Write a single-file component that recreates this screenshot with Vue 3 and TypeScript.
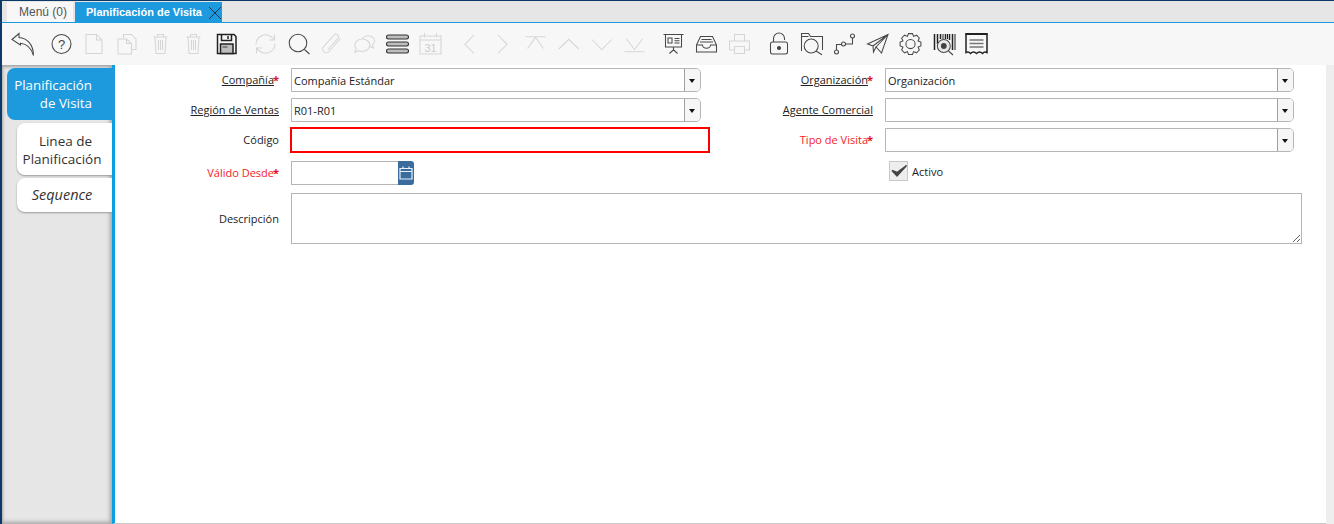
<script setup lang="ts">
interface Tool {
  name: string
  body: string
  off?: boolean
}

// gear outline, 8 teeth
const gearPath = (() => {
  const pts: string[] = []
  for (let i = 0; i < 8; i++) {
    const a = (i * Math.PI) / 4
    const step = Math.PI / 4
    const corners: [number, number][] = [
      [8.2, a - step * 0.5],
      [10.6, a - step * 0.24],
      [10.6, a + step * 0.24],
      [8.2, a + step * 0.5]
    ]
    for (const [r, t] of corners) {
      pts.push((14 + r * Math.cos(t)).toFixed(1) + ' ' + (14 + r * Math.sin(t)).toFixed(1))
    }
  }
  return 'M' + pts.join('L') + 'Z'
})()

const p = (d: string) => `<path d="${d}"/>`

const groups: Tool[][] = [
  [{ name: 'back', body: p('M3.5 9.5L10.5 3.5V7.5C18 8 25 14 25 25.5C23 18.5 18 13.8 12 13.2V15Z') }],
  [
    { name: 'help', body: '<circle cx="14" cy="14" r="9.5"/><text x="14" y="18.5" text-anchor="middle" font-size="13" font-family="Liberation Sans" fill="#444" stroke="none">?</text>' },
    { name: 'new', off: true, body: p('M5.5 4.5H16L21.5 10V23.5H5.5ZM16 4.5V10H21.5') },
    { name: 'copy', off: true, body: p('M10 8.5V4.5H18L22.5 9V19.5H18M4.5 9H13L18 13.5V24H4.5ZM13 9V13.5H18') },
    { name: 'delete', off: true, body: p('M7 7H21M11 7V4.5H17V7M8.5 7L9.5 23.5H18.5L19.5 7M12 10V20M14 10V20M16 10V20') },
    { name: 'deleteSel', off: true, body: p('M7 7H21M11 7V4.5H17V7M8.5 7L9.5 23.5H18.5L19.5 7M12 10V20M14 10V20M16 10V20') },
    { name: 'save', body: '<path class="dark" d="M5 4.5H21.5L23.5 6.5V23.5H5Z"/><path class="dark" d="M9 4.5V10.5H19V4.5M15.5 6V9"/><path class="dark shade" d="M8 14H20.5V23.5H8Z"/><path d="M10 17H15"/>' }
  ],
  [
    { name: 'refresh', off: true, body: p('M4.5 14.5A9.5 9.5 0 0 1 20.5 7.5L23 10M23.5 13.5A9.5 9.5 0 0 1 7.5 20.5L5 18M23 4.5V10H17.5M5 23.5V18H10.5') },
    { name: 'find', body: '<circle cx="13.5" cy="13" r="8.8"/><path d="M20 19.5L25 24"/>' },
    { name: 'attach', off: true, body: p('M23 8.5L11.5 21.5A3.6 3.6 0 0 1 6 16.8L16.5 5A2.6 2.6 0 0 1 20.5 8.3L10.5 19.5') },
    { name: 'chat', off: true, body: '<path d="M11 9A7.5 6.2 0 1 1 8 20.5L4.5 22.5L5.5 18.5A7.5 6.2 0 0 1 11 9Z"/><path d="M12 8.5A6.5 5.5 0 0 1 24 10.5C24 12.5 23.5 13.5 22 15L23 18L19.5 16.5"/>' },
    { name: 'grid', body: '<rect class="bar" x="3" y="5" width="22" height="4" rx="2"/><rect class="bar" x="3" y="12" width="22" height="4" rx="2"/><rect class="bar" x="3" y="19" width="22" height="4" rx="2"/>' },
    { name: 'calendar', off: true, body: '<path d="M3.5 6H24.5V24H3.5ZM3.5 10H24.5M8 3V7.5M20 3V7.5"/><text x="14" y="21.5" text-anchor="middle" font-size="11" font-family="Liberation Sans" fill="#ccc" stroke="none">31</text>' }
  ],
  [
    { name: 'prev', off: true, body: p('M18.5 5L9.5 14.3L18.5 23.5') },
    { name: 'next', off: true, body: p('M9.5 5L18.5 14.3L9.5 23.5') },
    { name: 'first', off: true, body: p('M4 6.7H24M6 18.5L14 7.5L22 18.5') },
    { name: 'up', off: true, body: p('M4.3 19L14.3 9.3L24.3 19') },
    { name: 'down', off: true, body: p('M4.3 9.5L14.3 19.5L24.3 9.5') },
    { name: 'last', off: true, body: p('M6 9L14 19.5L22 9M4 21.7H24') }
  ],
  [
    { name: 'report', body: p('M4 4.5H24M6 4.5V17H22V4.5M14 17V20M10 23.5L14 19.8L18 23.5M8.5 8H12.5V13H8.5ZM15 8.5H20M15 10.8H20M15 13H20') },
    { name: 'archive', body: p('M4 15L8 6.5H20L24 15V22H4ZM4 15H10A4 3.2 0 0 0 18 15H24M9 9.5H19M7.5 12H20.5') },
    { name: 'print', off: true, body: p('M9 11V4.5H19V11M9 20H4V11H24V20H19M9 16.5H19V23.5H9Z') }
  ],
  [
    { name: 'lock', body: '<rect x="6" y="12" width="17" height="12" rx="2"/><path d="M9 12V8.5A5.5 5.5 0 0 1 20 8.5V10"/><circle class="solid" cx="14.5" cy="18" r="1.5"/>' },
    { name: 'zoom', body: '<path d="M4 21V3.5H11L13 6.5H25V20"/><path d="M4 6.5H11"/><circle cx="13.7" cy="16" r="7"/><path d="M18.5 21L24.5 24.8"/>' },
    { name: 'workflow', body: '<circle cx="6" cy="22" r="2"/><circle cx="13" cy="14" r="2"/><circle cx="22" cy="6" r="2"/><path d="M6 20V14.5H11M15 14H22V8"/>' },
    { name: 'send', body: p('M4 14L24.5 4.5L18 23L12.5 17L10 22L9.5 16ZM9.5 16L24.5 4.5L12.5 17') },
    { name: 'gear', body: `<path d="${gearPath}"/><circle cx="14" cy="14" r="4.6"/>` },
    { name: 'barcode', body: '<path class="dark" stroke-width="2" d="M5 4V20M8 4V14M11 4V9M16 4V9M20 4V10M23 4V20"/><path class="dark thin" d="M13.5 4V9M18 4V9M25.5 4V20"/><circle class="lens" cx="14.3" cy="16" r="6.5"/><circle class="solid" cx="14.3" cy="16" r="2.4"/><path d="M19 21L23.5 25"/>' },
    { name: 'receipt', body: '<path class="dark" d="M3.5 4H24.5V22.5Q22 21 20 23.5Q17 20.5 14 23.5Q11 20.5 8 23.5Q6 21 3.5 22.5Z"/><path class="dark top" d="M3 4H25"/><path class="grey" d="M7 10H21M7 13.5H21M7 17H21"/>' }
  ]
]
</script>

<template>
  <div class="page">
    <div class="tabbar">
      <div class="tab">Menú (0)</div>
      <div class="tab current">
        Planificación de Visita
        <svg class="close" viewBox="0 0 14 14" width="14" height="14"><path d="M1 1L13 13M13 1L1 13" /></svg>
      </div>
    </div>

    <div class="toolbar">
      <div v-for="(group, i) in groups" :key="i" class="group">
        <svg
          v-for="tool in group"
          :key="tool.name"
          class="tool"
          :class="{ off: tool.off }"
          viewBox="0 0 28 28"
          width="28"
          height="28"
          v-html="tool.body"
        ></svg>
      </div>
    </div>

    <div class="main">
      <div class="side">
        <div class="sidetab active">Planificación<br />de Visita</div>
        <div class="sidetab plan"><span class="line1">Linea de</span><br />Planificación</div>
        <div class="sidetab seq">Sequence</div>
      </div>

      <div class="content">
        <div class="form">
          <label class="lbl link">Compañía<span class="star">*</span></label>
          <div class="combo"><span class="val">Compañía Estándar</span><i class="drop"></i></div>
          <label class="lbl link">Organización<span class="star">*</span></label>
          <div class="combo short"><span class="val">Organización</span><i class="drop"></i></div>

          <label class="lbl link">Región de Ventas</label>
          <div class="combo"><span class="val">R01-R01</span><i class="drop"></i></div>
          <label class="lbl link">Agente Comercial</label>
          <div class="combo short"><span class="val"></span><i class="drop"></i></div>

          <label class="lbl">Código</label>
          <input class="code" type="text" />
          <label class="lbl req">Tipo de Visita<span class="star">*</span></label>
          <div class="combo short"><span class="val"></span><i class="drop"></i></div>

          <label class="lbl req">Válido Desde<span class="star">*</span></label>
          <div class="date">
            <span class="dateval"></span>
            <span class="datebtn">
              <svg viewBox="0 0 14 14" width="14" height="14"><path d="M1 2.5H13V13H1ZM1 5.5H13M4 0.5V3M10 0.5V3" /></svg>
            </span>
          </div>
          <div class="check">
            <span class="box">
              <svg viewBox="0 0 20 20" width="20" height="20"><path d="M3 9.5L8 15L17.5 4.5L8 11.5Z" /></svg>
            </span>
            Activo
          </div>

          <label class="lbl desc">Descripción</label>
          <textarea class="memo"></textarea>
        </div>
      </div>
      <div class="scrollstrip"></div>
    </div>
  </div>
</template>

<style>
html,
body {
  margin: 0;
  background: #fff;
}
</style>

<style scoped>
.page {
  width: 1334px;
  height: 524px;
  box-sizing: border-box;
  border-top: 1px solid #0b3a68;
  border-left: 2px solid #0b3a68;
  display: flex;
  flex-direction: column;
  overflow: hidden;
  font-family: "Open Sans", sans-serif;
  font-size: 11px;
  color: #222;
}

.tabbar {
  height: 21px;
  display: flex;
  align-items: flex-end;
  gap: 2px;
  padding-left: 5px;
  background: #e6e6e6;
  border-bottom: 1px solid #1a9be0;
  font-family: "Liberation Sans", sans-serif;
  font-size: 12px;
}

.tab {
  width: 66px;
  box-sizing: border-box;
  height: 20px;
  line-height: 21px;
  padding: 0 0 0 12px;
  background: #f7f7f7;
  color: #555;
}

.tab.current {
  position: relative;
  width: 147px;
  padding: 0 0 0 11px;
  background: #1d9ade;
  color: #fff;
  font-weight: 700;
  font-size: 11px;
}

.close {
  position: absolute;
  right: 0;
  top: 4px;
  fill: none;
  stroke: #16364f;
  stroke-width: 1;
}

.toolbar {
  height: 42px;
  display: flex;
  align-items: center;
  gap: 6px;
  padding-left: 3.5px;
  background: #f7f7f7;
}

.group {
  display: flex;
}

.tool {
  width: 33px;
  fill: none;
  stroke: #484848;
  stroke-width: 1.05;
}

.tool.off {
  stroke: #d6d6d6;
}

.tool :deep(.dark) {
  stroke: #222;
  stroke-width: 1.5;
}

.tool :deep(.thin) {
  stroke-width: 1;
}

.tool :deep(.top) {
  stroke-width: 2;
}

.tool :deep(.shade) {
  fill: #bdbdbd;
}

.tool :deep(.bar) {
  fill: #bdbdbd;
  stroke: #333;
}

.tool :deep(.solid) {
  fill: #3f3f3f;
}

.tool :deep(.lens) {
  fill: #e8e8e8;
}

.tool :deep(.grey) {
  stroke: #777;
  stroke-width: 1.6;
}

.main {
  flex: 1;
  display: flex;
  min-height: 0;
}

.side {
  width: 110px;
  box-sizing: border-box;
  padding-top: 3px;
  background: #e6e6e6;
  box-shadow: inset -3px 0 4px -1px #aaa, inset 0 3px 3px -1px #aaa, inset 0 -3px 4px -1px #aaa, inset 3px 0 3px -2px #bbb;
  display: flex;
  flex-direction: column;
  align-items: flex-end;
  gap: 3px;
  font-size: 13.5px;
  line-height: 18px;
}

.sidetab {
  width: 95px;
  box-sizing: border-box;
  padding: 8px 5px 8px 0;
  background: #fff;
  border-radius: 8px 0 0 8px;
  box-shadow: 0 1px 2px #999;
  text-align: center;
  color: #333;
}

.sidetab.active {
  position: relative;
  width: 108px;
  height: 52px;
  margin-right: -3px;
  padding: 8px 23px 0 0;
  text-align: right;
  background: #1d9ade;
  color: #fff;
  font-size: 13.3px;
  font-weight: 500;
  box-shadow: none;
}

.sidetab.plan {
  padding: 9px 5px 7px 0;
}

.line1 {
  padding-left: 7px;
}

.sidetab.seq {
  font-size: 14.5px;
  font-style: italic;
}

.content {
  flex: 1;
  border-left: 3px solid #0a9fe3;
  border-bottom: 1px solid #c8c8c8;
  background: #fff;
}

.scrollstrip {
  width: 8px;
  background: #eee;
}

.form {
  display: grid;
  grid-template-columns: 164px 419px 151px 417px;
  grid-template-rows: 30px 30px 33px 32px 51px;
  column-gap: 12px;
  align-items: start;
  padding-top: 3px;
}

.lbl {
  height: 24px;
  line-height: 24px;
  text-align: right;
  white-space: nowrap;
}

.lbl.link {
  text-decoration: underline;
}

.lbl.req {
  color: #f8212b;
}

.lbl.desc {
  line-height: 52px;
}

.star {
  display: inline-block;
  margin-left: -1px;
  color: #e3101c;
  font-weight: 700;
}

.combo {
  width: 410px;
  height: 24px;
  box-sizing: border-box;
  display: flex;
  border: 1px solid #b5b5b5;
  border-radius: 0 5px 5px 0;
  background: #fff;
}

.combo.short {
  width: 409px;
}

.val {
  flex: 1;
  line-height: 24px;
  padding-left: 2px;
}

.drop {
  width: 15px;
  position: relative;
  border-left: 1px solid #a0a0a0;
  background: #f6f6f6;
  border-radius: 0 4px 4px 0;
}

.drop::after {
  content: "";
  position: absolute;
  left: 4px;
  top: 10px;
  border: 3.5px solid transparent;
  border-top: 4px solid #111;
  border-bottom: 0;
}

.code {
  width: 420px;
  height: 26px;
  box-sizing: border-box;
  margin: -1px 0 0 -1px;
  border: 2px solid #f00;
  outline: none;
  background: #fff;
}

.date {
  display: flex;
  width: 123px;
  height: 24px;
}

.dateval {
  flex: 1;
  border: 1px solid #b5b5b5;
  border-right: 0;
}

.datebtn {
  width: 16px;
  display: flex;
  align-items: center;
  justify-content: center;
  background: #3a6d9e;
  border-radius: 0 3px 3px 0;
}

.datebtn svg {
  fill: none;
  stroke: #e8f2fa;
  stroke-width: 1.2;
}

.check {
  grid-column: 4;
  display: flex;
  align-items: center;
  gap: 4px;
  height: 20px;
  margin-left: 4px;
}

.box {
  width: 19px;
  height: 20px;
  box-sizing: border-box;
  border: 1px solid #c0c8d0;
  background: #eee;
  display: flex;
  align-items: center;
  justify-content: center;
}

.box svg {
  flex: none;
  fill: #444;
  stroke: #444;
  stroke-width: 1.4;
}

.memo {
  grid-column: 2 / span 3;
  height: 51px;
  box-sizing: border-box;
  border: 1px solid #b5b5b5;
  border-radius: 0;
  outline: none;
  margin: 0;
  padding: 2px;
  display: block;
  font: inherit;
}
</style>
